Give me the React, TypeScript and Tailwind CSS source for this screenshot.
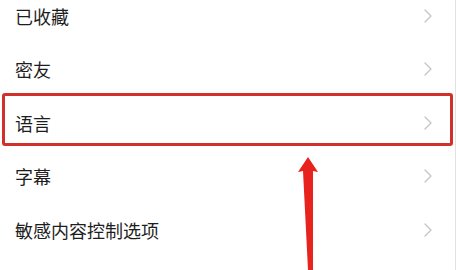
const ITEMS = ["已收藏", "密友", "语言", "字幕", "敏感内容控制选项"];

function Chevron() {
  return (
    <svg width="10" height="14" viewBox="0 0 10 14" className="shrink-0">
      <polyline
        points="2,1 8,7 2,13"
        fill="none"
        stroke="#c6c6c6"
        strokeWidth="1.4"
        strokeLinejoin="round"
        strokeLinecap="round"
      />
    </svg>
  );
}

export default function App() {
  return (
    <div
      className="relative h-[270px] w-[456px] overflow-hidden border-r border-[#e2e2e2] bg-white"
      style={{ fontFamily: '"Noto Sans CJK SC", "Noto Sans", sans-serif' }}
    >
      <div className="mt-[-11px] flex flex-col">
        {ITEMS.map((label) => (
          <div
            key={label}
            className="flex h-[53.5px] items-center justify-between pl-[15px] pr-[22px]"
          >
            <span className="text-[18px] leading-none text-[#1e1e1e]">
              {label}
            </span>
            <Chevron />
          </div>
        ))}
      </div>

      {/* annotation box */}
      <div className="absolute left-[2px] top-[93px] h-[53px] w-[451px] rounded-[3px] border-[3px] border-[#d2302b]" />

      {/* annotation arrow */}
      <svg
        className="absolute left-[290px] top-[150px]"
        width="40"
        height="120"
        viewBox="0 0 40 120"
      >
        <polygon
          points="18,7 28,22 23,21 23,120 18,120 13,21 8,22"
          fill="#e8231d"
        />
      </svg>
    </div>
  );
}
